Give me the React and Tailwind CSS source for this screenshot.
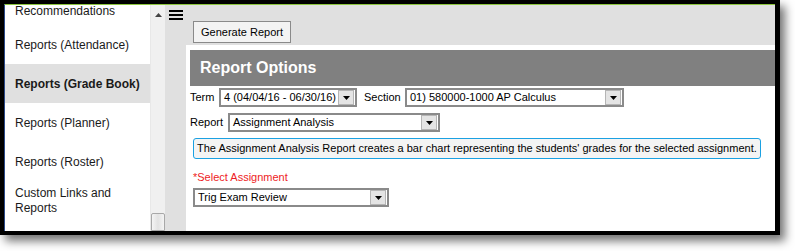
import React from 'react';

const sideItems = [
  { label: 'Reports (Attendance)' },
  { label: 'Reports (Grade Book)', active: true },
  { label: 'Reports (Planner)' },
  { label: 'Reports (Roster)' },
];

const Select = ({ value, className }) => (
  <div className={`flex items-center h-[19px] border-2 border-[#8a8a8a] bg-white ${className}`}>
    <span className="flex-1 pl-[3px] text-[11px] leading-none text-black whitespace-nowrap overflow-hidden">{value}</span>
    <span className="w-[16px] h-[15px] mr-[1px] flex items-center justify-center bg-[#e4e4e4] border border-[#b5b5b5]">
      <svg width="7" height="4" viewBox="0 0 7 4">
        <path d="M0 0h7L3.5 4z" fill="#000" />
      </svg>
    </span>
  </div>
);

export default function App() {
  return (
    <div className="w-[795px] h-[251px] bg-white overflow-hidden" style={{ fontFamily: '"Liberation Sans", Arial, sans-serif' }}>
      <div className="w-[780px] h-[235px] bg-black pt-[4px] pl-[4px] pr-[5px] pb-[4px] shadow-[5px_6px_9px_rgba(0,0,0,0.55)]">
        <div className="w-full h-full border-t border-t-[#8dc63f] border-l border-l-[#2c4a8a] flex overflow-hidden bg-white">
          {/* sidebar */}
          <div className="w-[145px] h-full overflow-hidden text-[12px] text-[#1a1a1a]">
            <div className="h-[29px] mt-[-9px] flex items-center pl-[10px]">Recommendations</div>
            {sideItems.map((item) => (
              <div
                key={item.label}
                className={`h-[39px] flex items-center pl-[10px] ${item.active ? 'bg-[#e0e0e0] font-bold' : ''}`}
              >
                {item.label}
              </div>
            ))}
            <div className="h-[39px] flex items-center pl-[10px] leading-[15px]">
              Custom Links and
              <br />
              Reports
            </div>
          </div>

          {/* scrollbar */}
          <div className="w-[15px] h-full bg-[#f0f0f0] flex flex-col justify-between items-center border-l border-[#e8e8e8]">
            <svg width="7" height="4" viewBox="0 0 7 4" className="mt-[8px]">
              <path d="M3.5 0L7 4H0z" fill="#444" />
            </svg>
            <div className="w-[14px] h-[18px] border border-[#a8a8a8] bg-gradient-to-r from-[#f4f4f4] via-[#e2e2e2] to-[#f4f4f4] rounded-t-[2px]" />
          </div>

          {/* main */}
          <div className="flex-1 h-full bg-[#e0e0e0] flex">
            <div className="w-[21px] pt-[5px] pl-[4px]">
              <div className="w-[14px] flex flex-col gap-[2px]">
                <div className="h-[2px] bg-black" />
                <div className="h-[2px] bg-black" />
                <div className="h-[2px] bg-black" />
              </div>
            </div>
            <div className="flex-1 flex flex-col">
              <div className="h-[40px] pt-[14px] pl-[7px]">
                <button className="h-[22px] w-[98px] border border-[#8a8a8a] bg-[#f3f3f3] text-[11px] text-black">
                  Generate Report
                </button>
              </div>
              <div className="flex-1 bg-white pt-[5px] pl-[4px]">
                <div className="h-[36px] bg-[#808080] flex items-center pl-[10px] text-white font-bold text-[16px]">
                  Report Options
                </div>
                <div className="text-[11px] text-black">
                  <div className="flex items-center mt-[2px] h-[19px]">
                    <span className="w-[29px]">Term</span>
                    <Select value="4 (04/04/16 - 06/30/16)" className="w-[138px]" />
                    <span className="ml-[7px] w-[41px]">Section</span>
                    <Select value="01) 580000-1000 AP Calculus" className="w-[219px]" />
                  </div>
                  <div className="flex items-center mt-[6px] h-[19px]">
                    <span className="w-[38px]">Report</span>
                    <Select value="Assignment Analysis" className="w-[212px]" />
                  </div>
                  <div className="mt-[6px] ml-[3px] w-[568px] h-[21px] border border-[#1ba1e2] rounded-[3px] bg-[#f4f4f4] flex items-center pl-[3px] whitespace-nowrap">
                    The Assignment Analysis Report creates a bar chart representing the students' grades for the selected assignment.
                  </div>
                  <div className="mt-[12px] ml-[3px] text-[#ee1c25] leading-[12px]">*Select Assignment</div>
                  <Select value="Trig Exam Review" className="w-[196px] mt-[5px] ml-[3px]" />
                </div>
              </div>
            </div>
          </div>
        </div>
      </div>
    </div>
  );
}
